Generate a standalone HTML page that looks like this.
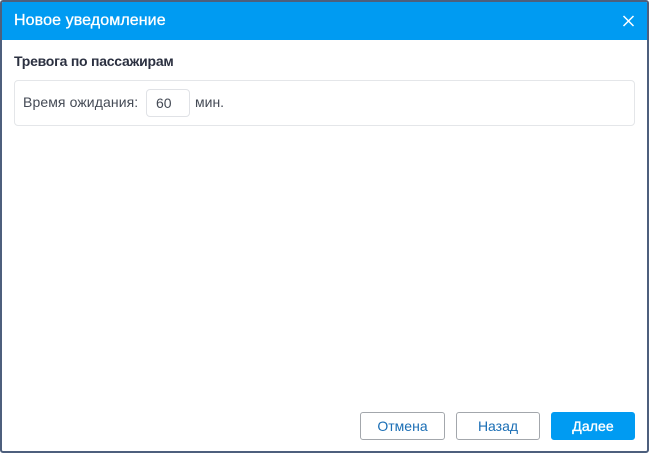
<!DOCTYPE html>
<html lang="ru">
<head>
<meta charset="utf-8">
<style>
html,body{margin:0;padding:0;width:649px;height:453px;overflow:hidden;background:#fff;font-family:"Liberation Sans",sans-serif}
*{box-sizing:border-box}
.abs{position:absolute;white-space:nowrap}
#win{position:absolute;left:0;top:0;width:649px;height:453px;border:2px solid #4d5f7d;border-radius:3px;background:#fff;overflow:hidden}
#head{position:absolute;left:2px;top:2px;width:645px;height:38px;background:#009bf2;border-radius:1px 1px 0 0}
#box{position:absolute;left:14px;top:80px;width:621px;height:46px;border:1px solid #e4e6e9;border-radius:4px}
#inp{position:absolute;left:146px;top:89px;width:44px;height:28px;border:1px solid #e0e2e6;border-radius:4px}
.btn{position:absolute;top:412px;height:28px;width:85px;border:1px solid #a3a7ac;border-radius:3px;background:#fff;color:#1a6eb5;font-size:14px;line-height:26px;text-align:center}
</style>
</head>
<body>
<div id="win"></div>
<div id="head"></div>
<div class="abs" style="left:14px;top:12px;font-size:16px;line-height:18px;color:#fff;letter-spacing:.1px;-webkit-text-stroke:.3px #fff">Новое уведомление</div>
<svg class="abs" style="left:621px;top:14px" width="14" height="14" viewBox="0 0 14 14"><path d="M2.5 2L12.5 12M12.5 2L2.5 12" stroke="#fff" stroke-width="1.5" fill="none"/></svg>
<div class="abs" style="left:14px;top:53px;font-size:14px;line-height:16px;font-weight:700;color:#2b3040;letter-spacing:-.25px">Тревога по пассажирам</div>
<div id="box"></div>
<div class="abs" style="left:23px;top:94px;font-size:14px;line-height:16px;color:#444a55;letter-spacing:.1px">Время ожидания:</div>
<div id="inp"></div>
<div class="abs" style="left:156px;top:95px;font-size:14px;line-height:16px;color:#444a55">60</div>
<div class="abs" style="left:195px;top:94px;font-size:14px;line-height:16px;color:#444a55">мин.</div>
<div class="btn" style="left:360px;">Отмена</div>
<div class="btn" style="left:456px;width:84px">Назад</div>
<div class="btn" style="left:551px;width:84px;background:#009bf2;border-color:#009bf2;color:#fff;-webkit-text-stroke:.35px #fff;letter-spacing:.1px">Далее</div>
</body>
</html>
